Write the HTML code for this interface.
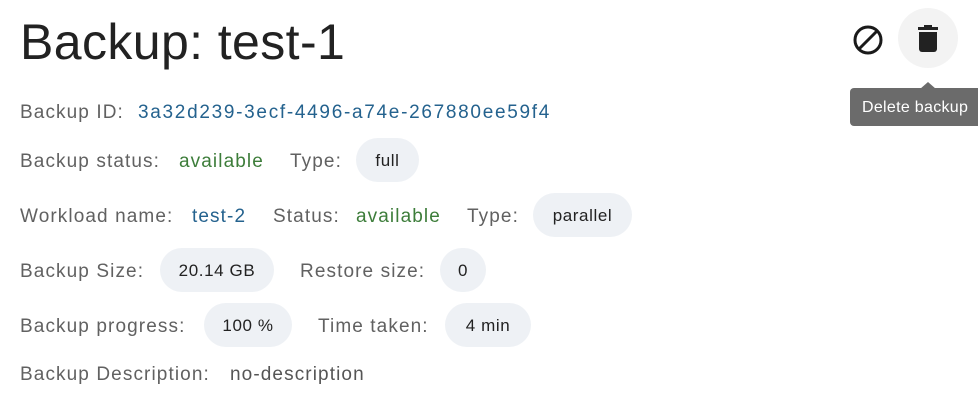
<!DOCTYPE html>
<html><head><style>
body{margin:0;width:978px;height:400px;background:#fff;font-family:"Liberation Sans",sans-serif;position:relative;overflow:hidden}
.a{position:absolute;white-space:nowrap;font-size:19px;line-height:20px;letter-spacing:1.1px;margin-top:2px}
.l{color:#616161}
.b{color:#24628e}
.g{color:#3d7d3a}
.c{position:absolute;background:#eef1f5;border-radius:22px;height:44px;line-height:45px;text-align:center;font-size:17px;letter-spacing:0.6px;color:#222}
</style></head><body>
<div class="a" style="left:20px;top:12px;font-size:50px;line-height:56px;letter-spacing:0.4px;color:#222">Backup: test-1</div>
<svg style="position:absolute;left:852px;top:24px" width="32" height="32" viewBox="0 0 32 32"><circle cx="16" cy="16" r="13" fill="none" stroke="#1a1a1a" stroke-width="3"/><line x1="7" y1="25" x2="25" y2="7" stroke="#1a1a1a" stroke-width="3"/></svg>
<div style="position:absolute;left:898px;top:8px;width:60px;height:60px;border-radius:50%;background:#f3f3f3"></div>
<svg style="position:absolute;left:918px;top:25px" width="20" height="27" viewBox="0 0 20 27"><rect x="0" y="2" width="20" height="3" fill="#222"/><rect x="6" y="0" width="8" height="3" fill="#222"/><path d="M1 7h18v17a3 3 0 0 1-3 3H4a3 3 0 0 1-3-3z" fill="#222"/></svg>
<div style="position:absolute;left:920px;top:82px;width:0;height:0;border-left:8px solid transparent;border-right:8px solid transparent;border-bottom:7px solid #6b6b6b"></div>
<div style="position:absolute;left:850px;top:88px;width:140px;height:38px;background:#6b6b6b;border-radius:4px;color:#fff;font-size:16px;line-height:40px;padding-left:12px;letter-spacing:0.3px;box-sizing:border-box">Delete backup</div>

<div class="a l" style="left:20px;top:101px">Backup ID:</div>
<div class="a b" style="left:138px;top:101px;letter-spacing:1.7px">3a32d239-3ecf-4496-a74e-267880ee59f4</div>

<div class="a l" style="left:20px;top:150px">Backup status:</div>
<div class="a g" style="left:179px;top:150px">available</div>
<div class="a l" style="left:290px;top:150px">Type:</div>
<div class="c" style="left:356px;top:138px;width:63px">full</div>

<div class="a l" style="left:20px;top:205px">Workload name:</div>
<div class="a b" style="left:192px;top:205px">test-2</div>
<div class="a l" style="left:273px;top:205px">Status:</div>
<div class="a g" style="left:356px;top:205px">available</div>
<div class="a l" style="left:467px;top:205px">Type:</div>
<div class="c" style="left:533px;top:193px;width:99px">parallel</div>

<div class="a l" style="left:20px;top:260px">Backup Size:</div>
<div class="c" style="left:160px;top:248px;width:114px">20.14 GB</div>
<div class="a l" style="left:300px;top:260px">Restore size:</div>
<div class="c" style="left:440px;top:248px;width:46px">0</div>

<div class="a l" style="left:20px;top:315px">Backup progress:</div>
<div class="c" style="left:204px;top:303px;width:88px">100 %</div>
<div class="a l" style="left:318px;top:315px">Time taken:</div>
<div class="c" style="left:445px;top:303px;width:86px">4 min</div>

<div class="a l" style="left:20px;top:363px">Backup Description:</div>
<div class="a" style="left:230px;top:363px;color:#555">no-description</div>
</body></html>
